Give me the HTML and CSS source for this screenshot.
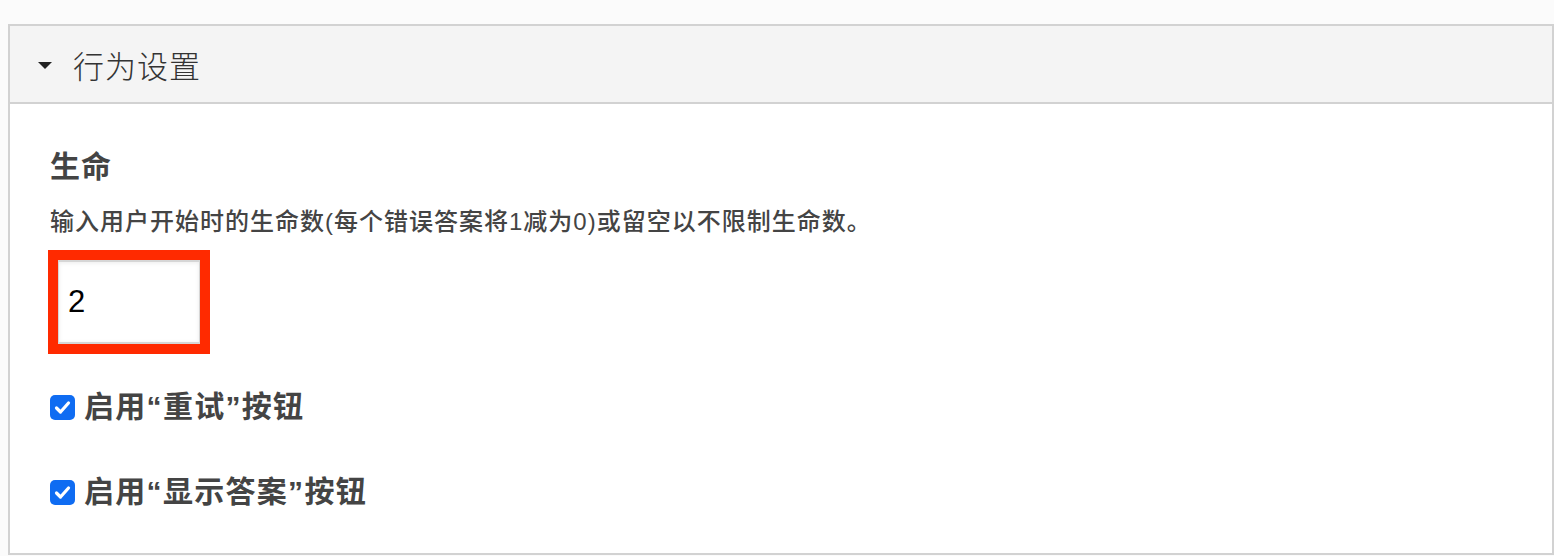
FILE: index.html
```html
<!DOCTYPE html>
<html lang="zh-CN">
<head>
    <meta charset="UTF-8">
    <meta name="viewport" content="width=device-width, initial-scale=1.0">
    <title>行为设置</title>
    <link rel="stylesheet" href="styles.css">
</head>
<body>

<div class="panel">
    <div class="panel-head">
        <span class="caret"></span>
        <span class="panel-title">行为设置</span>
    </div>

    <div class="panel-body">
        <div class="field-label">生命</div>
        <div class="field-desc">输入用户开始时的生命数(每个错误答案将1减为0)或留空以不限制生命数。</div>
        <div class="input-wrap">
            <input type="text" class="num-input" value="2">
        </div>

        <label class="check-row">
            <span class="check-box">
                <svg width="25" height="25" viewBox="0 0 25 25"><path d="M6.5 13 L10.5 17 L18.5 8" fill="none" stroke="#fff" stroke-width="3.2" stroke-linecap="round" stroke-linejoin="round"/></svg>
            </span>
            启用“重试”按钮
        </label>

        <label class="check-row">
            <span class="check-box">
                <svg width="25" height="25" viewBox="0 0 25 25"><path d="M6.5 13 L10.5 17 L18.5 8" fill="none" stroke="#fff" stroke-width="3.2" stroke-linecap="round" stroke-linejoin="round"/></svg>
            </span>
            启用“显示答案”按钮
        </label>
    </div>
</div>

</body>
</html>
```

FILE: styles.css
```css
body {
    font-family: "Liberation Sans", "Noto Sans CJK SC", sans-serif;
    background-color: #fbfbfb;
    margin: 0;
    padding: 24px 0 0 8px;
}
.panel {
    border: 2px solid #d2d2d2;
    background-color: white;
}
.panel-head {
    display: flex;
    align-items: center;
    height: 76px;
    padding-left: 28px;
    background-color: #f4f4f4;
    border-bottom: 2px solid #d2d2d2;
}
.caret {
    width: 0;
    height: 0;
    border-left: 7px solid transparent;
    border-right: 7px solid transparent;
    border-top: 7px solid #222;
    margin-right: 21px;
    margin-top: 2px;
}
.panel-title {
    font-size: 31px;
    color: #333;
    font-weight: 300;
    letter-spacing: 1px;
}
.panel-body {
    padding: 45px 40px 43px 40px;
}
.field-label {
    font-size: 30px;
    line-height: 36px;
    font-weight: bold;
    color: #444;
    letter-spacing: 1px;
}
.field-desc {
    margin-top: 22px;
    font-size: 24px;
    line-height: 30px;
    font-weight: 500;
    color: #444;
    letter-spacing: 1px;
}
.input-wrap {
    margin-top: 13px;
    margin-left: -2px;
    width: 142px;
    height: 84px;
    border: 10px solid #ff2a00;
}
.num-input {
    box-sizing: border-box;
    width: 142px;
    height: 84px;
    margin: 0;
    padding: 0 0 0 9px;
    border: 2px solid #d6d6d6;
    border-left-width: 1px;
    border-right-width: 1px;
    box-shadow: inset 0 1px 4px rgba(0, 0, 0, 0.08);
    font-family: "Liberation Sans", sans-serif;
    font-size: 31px;
    color: #000;
    outline: none;
}
.check-row {
    display: flex;
    align-items: center;
    margin-top: 35px;
    font-size: 30px;
    line-height: 36px;
    font-weight: bold;
    color: #444;
    letter-spacing: 1.3px;
}
.check-row + .check-row {
    margin-top: 49px;
}
.check-box {
    display: block;
    width: 25px;
    height: 25px;
    margin-right: 9px;
    background-color: #0f6cf2;
    border-radius: 5px;
}
.check-box svg {
    display: block;
}
```
